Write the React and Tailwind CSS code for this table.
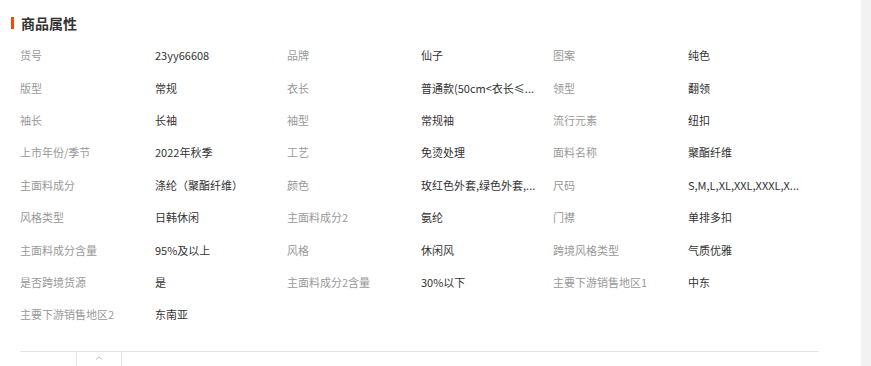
import { ChevronUp } from 'lucide-react';

// long values are shown cut, as the page does it
const attrs = [
  ['货号', '23yy66608'],
  ['品牌', '仙子'],
  ['图案', '纯色'],
  ['版型', '常规'],
  ['衣长', '普通款(50cm<衣长≤...'],
  ['领型', '翻领'],
  ['袖长', '长袖'],
  ['袖型', '常规袖'],
  ['流行元素', '纽扣'],
  ['上市年份/季节', '2022年秋季'],
  ['工艺', '免烫处理'],
  ['面料名称', '聚酯纤维'],
  ['主面料成分', '涤纶（聚酯纤维）'],
  ['颜色', '玫红色外套,绿色外套,...'],
  ['尺码', 'S,M,L,XL,XXL,XXXL,X...'],
  ['风格类型', '日韩休闲'],
  ['主面料成分2', '氨纶'],
  ['门襟', '单排多扣'],
  ['主面料成分含量', '95%及以上'],
  ['风格', '休闲风'],
  ['跨境风格类型', '气质优雅'],
  ['是否跨境货源', '是'],
  ['主面料成分2含量', '30%以下'],
  ['主要下游销售地区1', '中东'],
  ['主要下游销售地区2', '东南亚']
];

const App = () => {
  return (
    <div
      className="flex h-[366px] w-[871px] overflow-hidden bg-white"
      style={{ fontFamily: '"Noto Sans CJK SC", "Noto Sans", sans-serif' }}
    >
      <div className="w-[861px] shrink-0">
        <div className="ml-[11px] mt-[14px] flex h-[18px] items-center">
          <span className="h-[12px] w-[3px] bg-[#ff4400]" />
          <h3 className="ml-[7px] text-[14px] font-bold leading-[18px] text-[#333]">商品属性</h3>
        </div>

        <div className="ml-[20px] mt-[7px] grid grid-cols-[135px_132px_134px_132px_135px_133px] auto-rows-[32.4px] items-center text-[11px] leading-[16px]">
          {attrs.map(([label, value]) => (
            <div key={label} className="contents">
              <span className="whitespace-nowrap text-[#999]">{label}</span>
              <span className="whitespace-nowrap text-[#333]">{value}</span>
            </div>
          ))}
        </div>

        <div className="ml-[20px] mt-[20px] w-[799px] border-t border-[#e5e5e5]">
          <div className="ml-[56px] flex h-[14px] w-[46px] justify-center border-x border-[#e5e5e5]">
            <ChevronUp size={10} strokeWidth={2} className="mt-[1px] text-[#aaa]" />
          </div>
        </div>
      </div>
      <div className="flex-1 bg-[#f2f2f2]" />
    </div>
  );
};

export default App;
